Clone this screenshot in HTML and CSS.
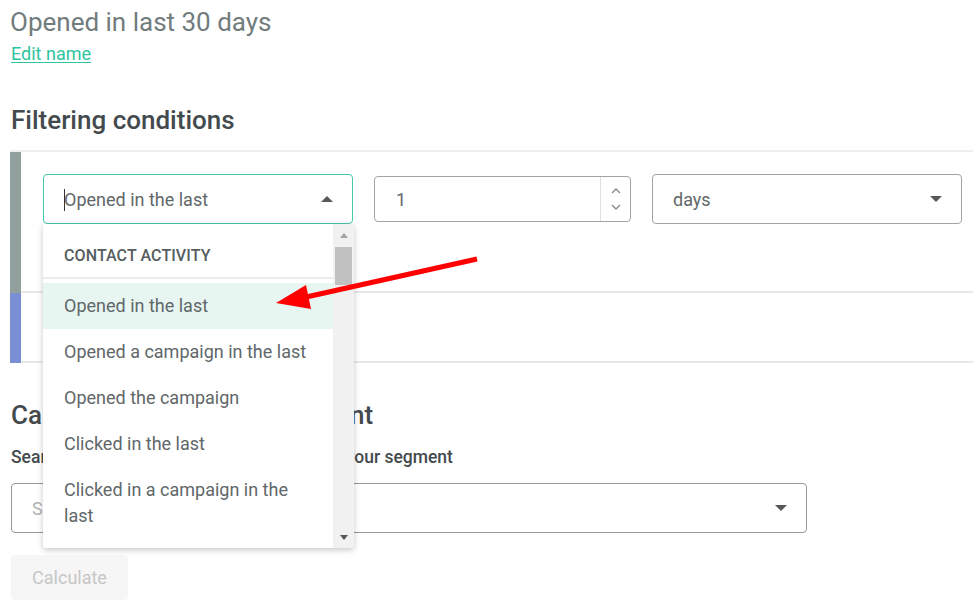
FILE: index.html
```html
<!DOCTYPE html>
<html>
<head>
<meta charset="utf-8">
<link rel="stylesheet" href="styles.css">
</head>
<body>
<div class="page">
  <h1 class="title">Opened in last 30 days</h1>
  <a class="edit" href="#">Edit name</a>
  <h2 class="section-title filter-title">Filtering conditions</h2>

  <div class="conditions">
    <div class="cond-row">
      <div class="bar bar-gray"></div>
      <div class="cond-body cond-body-main">
        <div class="field select active">
          <span class="caret"></span>
          <span class="value">Opened in the last</span>
          <span class="tri tri-up"></span>
          <div class="dropdown">
            <div class="dd-list">
              <div class="dd-header">Contact activity</div>
              <div class="dd-items">
                <div class="dd-item selected">Opened in the last</div>
                <div class="dd-item">Opened a campaign in the last</div>
                <div class="dd-item">Opened the campaign</div>
                <div class="dd-item">Clicked in the last</div>
                <div class="dd-item">Clicked in a campaign in the last</div>
                <div class="dd-item">Clicked the campaign</div>
              </div>
            </div>
            <div class="dd-scroll">
              <span class="sb-tri sb-up"></span>
              <span class="sb-thumb"></span>
              <span class="sb-tri sb-down"></span>
            </div>
          </div>
        </div>
        <div class="field number">
          <span class="value num-value">1</span>
          <span class="spinner">
            <svg class="chev" width="12" height="8" viewBox="0 0 12 8"><path d="M2 6 L6 2 L10 6" fill="none" stroke="#8a8a8a" stroke-width="1.4"/></svg>
            <svg class="chev" width="12" height="8" viewBox="0 0 12 8"><path d="M2 2 L6 6 L10 2" fill="none" stroke="#8a8a8a" stroke-width="1.4"/></svg>
          </span>
        </div>
        <div class="field select days">
          <span class="value">days</span>
          <span class="tri tri-down"></span>
        </div>
      </div>
    </div>
    <div class="cond-row">
      <div class="bar bar-blue"></div>
      <div class="cond-body cond-body-empty"></div>
    </div>
  </div>

  <h2 class="section-title calc-title">Calculate size of your segment</h2>
  <div class="field-label">Search a campaign to calculate the size of your segment</div>
  <div class="field select search">
    <span class="placeholder">Search campaign</span>
    <span class="tri tri-down"></span>
  </div>
  <button class="btn" type="button">Calculate</button>
</div>

<svg class="arrow" width="973" height="615" viewBox="0 0 973 615">
  <line x1="477" y1="259" x2="304" y2="297.5" stroke="#ff0000" stroke-width="5"/>
  <polygon points="276,303 306,285 311,309" fill="#ff0000"/>
</svg>
</body>
</html>
```

FILE: styles.css
```css
* { box-sizing: border-box; }

body {
  margin: 0;
  background: #ffffff;
  font-family: Roboto, "Liberation Sans", sans-serif;
  color: #5f6769;
}

.page {
  position: relative;
  padding: 8px 0 0 10px;
}

.title {
  margin: 0;
  font-size: 26px;
  font-weight: 400;
  line-height: 28px;
  color: #727c7d;
}

.edit {
  display: inline-block;
  margin-top: 7px;
  margin-left: 1px;
  font-size: 18px;
  line-height: 22px;
  color: #2cc5a0;
  text-decoration: underline;
  text-underline-offset: 2px;
}

.section-title {
  margin: 0;
  font-size: 26px;
  font-weight: 500;
  line-height: 28px;
  color: #434a4d;
}

.filter-title {
  margin-top: 41px;
  margin-left: 1px;
}

.conditions {
  margin-top: 16px;
  border-top: 2px solid #eeeeee;
}

.cond-row {
  display: flex;
}

.bar {
  width: 11px;
  flex: none;
}

.bar-gray { background: #919f9d; }
.bar-blue { background: #7a8fd3; }

.cond-body {
  flex: 1;
  border-bottom: 2px solid #e8e8e8;
}

.cond-body-main {
  height: 141px;
  padding: 22px 0 0 22px;
  display: flex;
  align-items: flex-start;
  gap: 21px;
}

.cond-body-empty {
  height: 70px;
}

.field {
  position: relative;
  display: flex;
  align-items: center;
  border: 1px solid #a3a3a3;
  border-radius: 4px;
  background: #ffffff;
  font-size: 18px;
  color: #5f6769;
}

.select {
  height: 50px;
  padding: 0 19px 0 20px;
}

.select .value,
.select .placeholder {
  flex: 1;
}

.active {
  width: 310px;
  border-color: #45c9a8;
}

.caret {
  position: absolute;
  left: 20px;
  top: 14px;
  width: 1px;
  height: 22px;
  background: #333333;
}

.days {
  width: 310px;
}

.number {
  width: 257px;
  height: 46px;
  margin-top: 2px;
  padding-left: 21px;
}

.num-value {
  flex: 1;
}

.spinner {
  width: 30px;
  height: 100%;
  border-left: 1px solid #e0e0e0;
  display: flex;
  flex-direction: column;
  align-items: center;
  justify-content: center;
  gap: 8px;
}

.chev { display: block; }

.tri {
  width: 0;
  height: 0;
  border-left: 6px solid transparent;
  border-right: 6px solid transparent;
}

.tri-up { border-bottom: 6px solid #585858; }
.tri-down { border-top: 6px solid #585858; }

/* dropdown */
.dropdown {
  position: absolute;
  left: -1px;
  top: 49px;
  width: 311px;
  height: 324px;
  background: #ffffff;
  box-shadow: 0 2px 6px rgba(0, 0, 0, 0.22);
  border-radius: 0 0 3px 3px;
  display: flex;
  overflow: hidden;
  z-index: 5;
}

.dd-list {
  width: 290px;
  overflow: hidden;
}

.dd-header {
  height: 55px;
  padding: 22px 0 0 21px;
  font-size: 16px;
  line-height: 20px;
  font-weight: 500;
  text-transform: uppercase;
  color: #555d60;
  border-bottom: 2px solid #ececec;
  letter-spacing: 0.1px;
}

.dd-items {
  padding-top: 4px;
}

.dd-item {
  padding: 10px 21px 10px 21px;
  font-size: 18px;
  line-height: 26px;
  color: #5f6769;
}

.dd-item.selected {
  background: #e8f6f2;
}

.dd-scroll {
  position: relative;
  width: 21px;
  background: #f1f1f1;
  display: flex;
  flex-direction: column;
  align-items: center;
}

.sb-tri {
  width: 0;
  height: 0;
  border-left: 4.5px solid transparent;
  border-right: 4.5px solid transparent;
}

.sb-up {
  margin-top: 9px;
  border-bottom: 5px solid #a3a3a3;
}

.sb-down {
  margin-top: auto;
  margin-bottom: 8px;
  border-top: 5px solid #555555;
}

.sb-thumb {
  width: 17px;
  height: 38px;
  margin-top: 9px;
  background: #c1c1c1;
}

/* bottom section */
.calc-title {
  margin-top: 38px;
  margin-left: 1px;
  word-spacing: 1px;
}

.field-label {
  margin-top: 18px;
  margin-left: 1px;
  font-size: 17.5px;
  line-height: 20px;
  font-weight: 500;
  color: #434a4d;
}

.search {
  width: 796px;
  margin-top: 16px;
  margin-left: 1px;
  border-color: #999999;
}

.placeholder {
  color: #b3b3b3;
}

.btn {
  display: block;
  margin-top: 22px;
  margin-left: 1px;
  width: 117px;
  height: 45px;
  border: none;
  border-radius: 4px;
  background: #f6f6f6;
  font-family: Roboto, "Liberation Sans", sans-serif;
  font-size: 18px;
  color: #c6c6c6;
  padding: 0;
}

.arrow {
  position: absolute;
  left: 0;
  top: 0;
  pointer-events: none;
  z-index: 10;
}
```
